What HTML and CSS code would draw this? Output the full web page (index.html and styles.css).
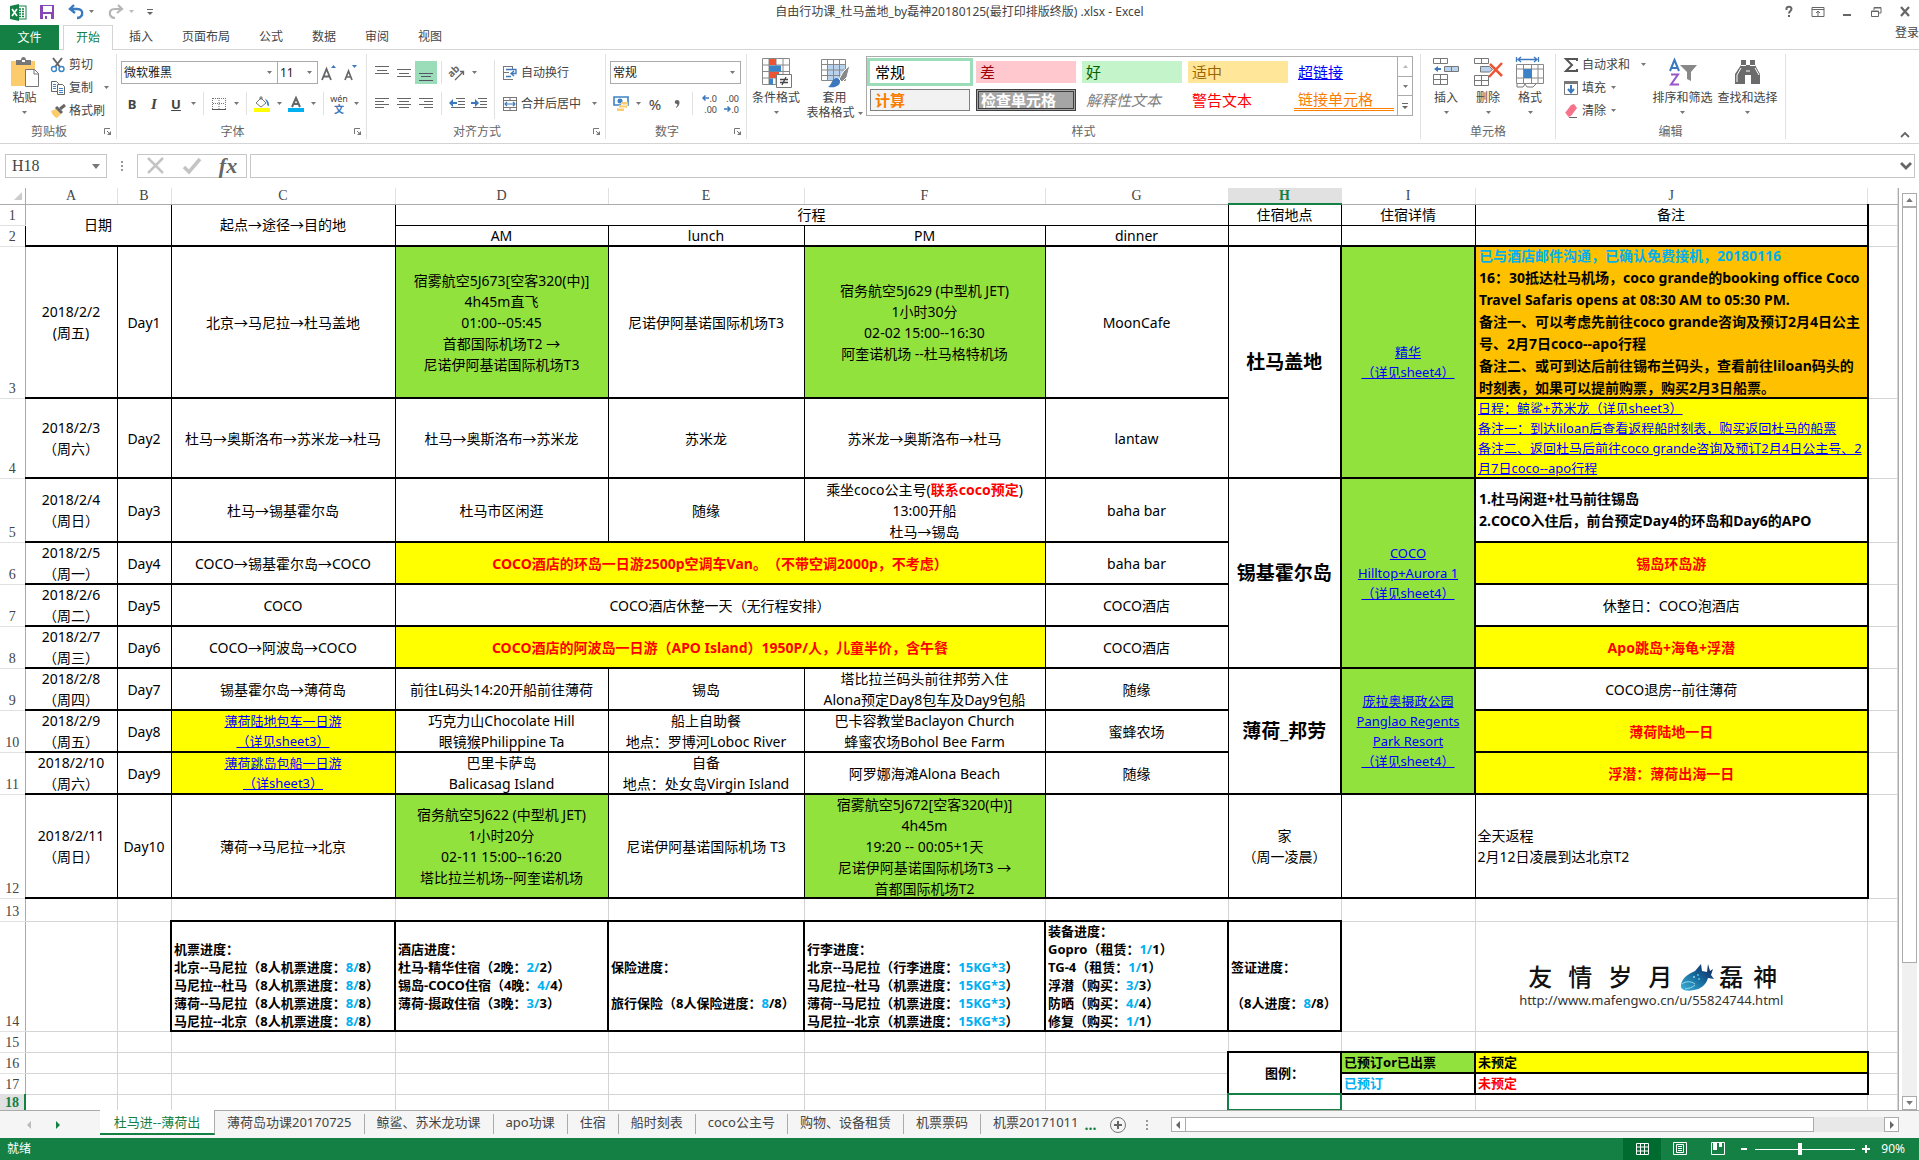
FILE: index.html
```html
<!DOCTYPE html>
<html lang="zh-CN">
<head>
<meta charset="utf-8">
<title>自由行功课_杜马盖地_by磊神20180125(最打印排版终版) .xlsx - Excel</title>
<link rel="stylesheet" href="styles.css">
</head>
<body>
<svg class="defs" aria-hidden="true">
  <symbol id="dd" viewBox="0 0 5 3"><path d="M0 0h5L2.500 3z" fill="#777"/></symbol>
  <symbol id="launch" viewBox="0 0 8 8"><path d="M.5 6V.5H6M3 3l3 3" fill="none" stroke="#777"/><path d="M7 3v4H3z" fill="#777"/></symbol>
</svg>

<header class="titlebar">
  <div class="qat">
    <svg class="app-icon" viewBox="0 0 20 18"><rect x="9" y="3" width="9" height="13" fill="#fff" stroke="#148044"/><path d="M11 6h2m1 0h2M11 8.500h2m1 0h2M11 11h2m1 0h2M11 13.500h2m1 0h2" stroke="#148044" stroke-width="1.300"/><path d="M2 3l9-2v17l-9-2z" fill="#148044"/><path d="M4 6l5 7M9 6l-5 7" stroke="#fff" stroke-width="1.700"/></svg>
    <button class="q-save" aria-label="保存"><svg class="i16" viewBox="0 0 16 16"><path d="M1 1h14v14H1z" fill="#8548b5"/><path d="M4 2h9v6H4z" fill="#fff"/><path d="M4 10h8v5H4z" fill="#fff"/><path d="M6 12h2v3H6z" fill="#8548b5"/></svg></button>
    <button class="q-btn" aria-label="撤消"><svg class="i16" viewBox="0 0 16 16"><path d="M6 1L2 5l5 4M2 5h7c4 0 6 2 5 6-1 2-3 3-5 3" fill="none" stroke="#3b78bd" stroke-width="2.400"/></svg></button>
    <button class="q-ar" aria-label="撤消列表"><svg class="dd"><use href="#dd"/></svg></button>
    <button class="q-btn q-redo" aria-label="恢复"><svg class="i16" viewBox="0 0 16 16"><path d="M10 1l4 4-5 4M14 5H7c-4 0-6 2-5 6 1 2 3 3 5 3" fill="none" stroke="#b5b5b5" stroke-width="2.200"/></svg></button>
    <button class="q-ar faded" aria-label="恢复列表"><svg class="dd"><use href="#dd"/></svg></button>
    <button class="q-more" aria-label="自定义快速访问工具栏"><svg class="i8" viewBox="0 0 8 8"><path d="M1 1.500h6" stroke="#666"/><path d="M1 4h6L4 7z" fill="#666"/></svg></button>
  </div>
  <h1 class="doc-title">自由行功课_杜马盖地_by磊神20180125(最打印排版终版) .xlsx - Excel</h1>
  <div class="win-btns">
    <button aria-label="帮助"><svg class="i16" viewBox="0 0 16 16"><path d="M5.500 6V4.500C5.500 2 10.500 2 10.500 5c0 2-2.500 2-2.500 4.500" fill="none" stroke="#666" stroke-width="2"/><path d="M7 11h2v2H7z" fill="#666"/></svg></button>
    <button aria-label="功能区显示选项"><svg class="i16" viewBox="0 0 16 16"><path d="M2 3.500h12v9H2zM2 5.500h12M8 12V7M6 9l2-2 2 2" fill="none" stroke="#666"/></svg></button>
    <button aria-label="最小化"><svg class="i16" viewBox="0 0 16 16"><path d="M4 10h8v2H4z" fill="#666"/></svg></button>
    <button aria-label="还原"><svg class="i16" viewBox="0 0 16 16"><path d="M3.500 7h7v5.500h-7zM6 6V3.500h7V9h-2M3 7.500h8M6 4h7" fill="none" stroke="#666"/></svg></button>
    <button aria-label="关闭"><svg class="i16" viewBox="0 0 16 16"><path d="M4 3l8 9M12 3l-8 9" stroke="#666" stroke-width="2.200"/></svg></button>
  </div>
</header>

<nav class="ribbon-tabs">
  <button class="file">文件</button>
  <button class="active">开始</button>
  <button>插入</button>
  <button>页面布局</button>
  <button>公式</button>
  <button>数据</button>
  <button>审阅</button>
  <button>视图</button>
  <a class="login" href="#">登录</a>
</nav>

<section class="ribbon" aria-label="开始">
  <div class="group g-clip">
    <div class="body">
      <button class="big b-paste"><svg class="i32" viewBox="0 0 32 32"><path d="M2 5h24v25H2z" fill="#fbcb6c"/><path d="M7 4h5c0-4 5-4 5 0h5v5H7z" fill="#777"/><path d="M13 4h3v2h-3z" fill="#fff"/><path d="M16.500 13.500h9l4 4v13h-13z" fill="#fff" stroke="#777"/><path d="M25 13v5h5" fill="none" stroke="#777"/></svg><span>粘贴</span><svg class="dd"><use href="#dd"/></svg></button>
      <div class="stack">
        <button class="sm"><svg class="i16" viewBox="0 0 16 16"><path d="M3 1l7 9M12 1L5 10" stroke="#666" stroke-width="2"/><circle cx="4" cy="12" r="2.500" fill="none" stroke="#3b83c5" stroke-width="1.400"/><circle cx="11.500" cy="12" r="2.500" fill="none" stroke="#3b83c5" stroke-width="1.400"/></svg>剪切</button>
        <button class="sm"><svg class="i16" viewBox="0 0 16 16"><path d="M1.500 1.500h5l2 2v8h-7z" fill="#fff" stroke="#666"/><path d="M3 4.500h3M3 6.500h3M3 8.500h3" stroke="#3b83c5"/><path d="M7.500 4.500h5l2 2v8h-7z" fill="#fff" stroke="#666"/><path d="M9 8.500h4M9 10.500h4M9 12.500h4" stroke="#3b83c5"/></svg>复制<svg class="dd far"><use href="#dd"/></svg></button>
        <button class="sm"><svg class="i16" viewBox="0 0 16 16"><path d="M1 8l5-2 5 5-4 4c-3-1-5-4-6-7z" fill="#fbcb6c"/><path d="M6 4l6 6" stroke="#666" stroke-width="3"/><path d="M10 6l5-4" stroke="#666" stroke-width="3"/></svg>格式刷</button>
      </div>
    </div>
    <div class="glabel"><span>剪贴板</span><button aria-label="剪贴板选项"><svg class="i8"><use href="#launch"/></svg></button></div>
  </div>

  <div class="group g-font">
    <div class="body rows">
      <div class="row">
        <select class="combo c-font" aria-label="字体"><option>微软雅黑</option></select>
        <select class="combo c-size" aria-label="字号"><option>11</option></select>
        <button class="tb" aria-label="增大字号"><svg class="i16" viewBox="0 0 16 16"><path d="M1 15L5.500 4 10 15M3 11.500h5" fill="none" stroke="#666" stroke-width="1.800"/><path d="M10 3h5l-2.500-3z" fill="#3b78bd"/></svg></button>
        <button class="tb" aria-label="减小字号"><svg class="i16" viewBox="0 0 16 16"><path d="M2 15l3.500-9L9 15M3 12h5" fill="none" stroke="#666" stroke-width="1.700"/><path d="M9 0h5l-2.500 3z" fill="#3b78bd"/></svg></button>
      </div>
      <div class="row">
        <button class="tb bold">B</button>
        <button class="tb bold ital">I</button>
        <button class="tb bold under">U</button>
        <button class="ar" aria-label="下划线样式"><svg class="dd"><use href="#dd"/></svg></button>
        <i class="sep"></i>
        <button class="tb" aria-label="边框"><svg class="i16" viewBox="0 0 16 16"><path d="M1.500 2v11M14.500 2v11M8 2v11M2 2.500h12M2 7.500h12" stroke="#777" stroke-dasharray="1 1"/><path d="M1 13.500h14" stroke="#555"/></svg></button>
        <button class="ar" aria-label="边框样式"><svg class="dd"><use href="#dd"/></svg></button>
        <i class="sep"></i>
        <button class="tb" aria-label="填充颜色"><svg class="i16" viewBox="0 0 16 16"><path d="M2 7l5-5 5 5-5 4zM6 4V1h2v3" fill="#fff" stroke="#777"/><path d="M11 3c3 1 4 3 4 7-2 0-2-2-2-3z" fill="#3b83c5"/><path d="M0 12h16v4H0z" fill="#ff0"/></svg></button>
        <button class="ar" aria-label="填充颜色列表"><svg class="dd"><use href="#dd"/></svg></button>
        <button class="tb" aria-label="字体颜色"><svg class="i16" viewBox="0 0 16 16"><path d="M4 11L8 2l4 9M5.500 8h5" fill="none" stroke="#666" stroke-width="2"/><path d="M0 12h16v4H0z" fill="#00b0f0"/></svg></button>
        <button class="ar" aria-label="字体颜色列表"><svg class="dd"><use href="#dd"/></svg></button>
        <i class="sep"></i>
        <button class="tb wen" aria-label="拼音"><span>wén</span><span class="zh">文</span></button>
        <button class="ar" aria-label="拼音选项"><svg class="dd"><use href="#dd"/></svg></button>
      </div>
    </div>
    <div class="glabel"><span>字体</span><button aria-label="字体选项"><svg class="i8"><use href="#launch"/></svg></button></div>
  </div>

  <div class="group g-align">
    <div class="body">
      <div class="rows al-left">
        <div class="row">
          <button class="tb" aria-label="顶端对齐"><svg class="i16" viewBox="0 0 16 16"><path d="M1 1.500h14M3 5.500h10M1 8.500h14" stroke="#666"/></svg></button>
          <button class="tb" aria-label="垂直居中"><svg class="i16" viewBox="0 0 16 16"><path d="M1 4.500h14M3 8.500h10M1 11.500h14" stroke="#666"/></svg></button>
          <button class="tb on" aria-label="底端对齐"><svg class="i16" viewBox="0 0 16 16"><path d="M1 8.500h14M3 11.500h10M1 15.500h14" stroke="#556"/></svg></button>
          <i class="sep"></i>
          <button class="tb" aria-label="方向"><svg class="i16" viewBox="0 0 16 16"><text x="0" y="9" transform="rotate(-45 6 8)" class="ab">ab</text><path d="M6 15l8-8M11 6.500h3.500V10" fill="none" stroke="#666" stroke-width="1.300"/></svg></button>
          <button class="ar" aria-label="方向列表"><svg class="dd"><use href="#dd"/></svg></button>
        </div>
        <div class="row">
          <button class="tb" aria-label="左对齐"><svg class="i16" viewBox="0 0 16 16"><path d="M1 2.500h14M1 5.500h9M1 8.500h14M1 11.500h9" stroke="#666"/></svg></button>
          <button class="tb" aria-label="居中"><svg class="i16" viewBox="0 0 16 16"><path d="M1 2.500h14M3 5.500h10M1 8.500h14M3 11.500h10" stroke="#666"/></svg></button>
          <button class="tb" aria-label="右对齐"><svg class="i16" viewBox="0 0 16 16"><path d="M1 2.500h14M6 5.500h9M1 8.500h14M6 11.500h9" stroke="#666"/></svg></button>
          <i class="sep"></i>
          <button class="tb" aria-label="减少缩进量"><svg class="i16" viewBox="0 0 16 16"><path d="M7 2.500h9M9 5.500h7M9 8.500h7M2 11.500h14" stroke="#666"/><path d="M0 7l4-4v3h4v2H4v3z" fill="#3b78bd"/></svg></button>
          <button class="tb" aria-label="增加缩进量"><svg class="i16" viewBox="0 0 16 16"><path d="M7 2.500h9M9 5.500h7M9 8.500h7M2 11.500h14" stroke="#666"/><path d="M8 7L4 3v3H0v2h4v3z" fill="#3b78bd"/></svg></button>
        </div>
      </div>
      <i class="vsep"></i>
      <div class="rows">
        <button class="sm"><svg class="i16" viewBox="0 0 16 16"><path d="M1.500 1v14M1 1.500h10M1 7.500h6M1 14.500h10M10.500 1v4" stroke="#777" fill="none"/><path d="M4 4.500h10v4h-4M4 11.500h5M12 6l-3 2.500L12 11" fill="none" stroke="#3b78bd" stroke-width="1.300"/></svg>自动换行</button>
        <button class="sm"><svg class="i16" viewBox="0 0 16 16"><path d="M1.500 1v14M14.500 1v14M1 1.500h14M1 4.500h14M1 11.500h14M1 14.500h14M8 1v3M8 12v3" stroke="#777"/><path d="M3 8h10M5 6L3 8l2 2M11 6l2 2-2 2" fill="none" stroke="#3b78bd" stroke-width="1.200"/></svg>合并后居中<svg class="dd far"><use href="#dd"/></svg></button>
      </div>
    </div>
    <div class="glabel"><span>对齐方式</span><button aria-label="对齐选项"><svg class="i8"><use href="#launch"/></svg></button></div>
  </div>

  <div class="group g-num">
    <div class="body rows">
      <div class="row"><select class="combo c-num" aria-label="数字格式"><option>常规</option></select></div>
      <div class="row">
        <button class="tb" aria-label="会计数字格式"><svg class="i16" viewBox="0 0 16 16"><path d="M1 1h14v8H1z" fill="#fff" stroke="#3b83c5" stroke-width="1.600"/><circle cx="7" cy="5" r="2.500" fill="#3b83c5"/><path d="M8 6h7v3H8zM6 9h8v3H6zM4 12h7v3H4z" fill="#fbcb6c"/><path d="M8 9h7M5 12h8" stroke="#fff" fill="none"/></svg></button>
        <button class="ar" aria-label="货币列表"><svg class="dd"><use href="#dd"/></svg></button>
        <button class="tb pct">%</button>
        <button class="tb comma" aria-label="千位分隔"><svg class="i16" viewBox="0 0 16 16"><path d="M8 4c4 0 3 6-1 8v-1c1-1 2-2 1-3-3 0-3-4 0-4z" fill="#666"/></svg></button>
        <i class="sep"></i>
        <button class="tb dec" aria-label="增加小数位数"><span><svg class="dec-ar" viewBox="0 0 7 6"><path d="M7 3H1M3.500.5L1 3l2.500 2.500" fill="none" stroke="#3b78bd" stroke-width="1.500"/></svg>.0</span><span>.00</span></button>
        <button class="tb dec" aria-label="减少小数位数"><span>.00</span><span><svg class="dec-ar" viewBox="0 0 7 6"><path d="M0 3h6M3.500.5L6 3 3.500 5.500" fill="none" stroke="#3b78bd" stroke-width="1.500"/></svg>.0</span></button>
      </div>
    </div>
    <div class="glabel"><span>数字</span><button aria-label="数字选项"><svg class="i8"><use href="#launch"/></svg></button></div>
  </div>

  <div class="group g-style">
    <div class="body">
      <button class="big b-cond"><svg class="i32" viewBox="0 0 32 32"><path d="M2.500 2.500h27v26h-27zM2 9h28M2 15.500h28M2 22h28M9 2v27M16 2v27M23 2v27" fill="#fff" stroke="#888"/><path d="M9 3h7v6H9zM9 16h10v6H9z" fill="#ee5431"/><path d="M9 9.500h12v6H9zM9 22.500h4v6H9z" fill="#3b83c5"/><path d="M16.500 18.500h15v13h-15z" fill="#fff" stroke="#777"/><path d="M20 23.500h8M20 26.500h8M26 21l-4 8" stroke="#444" stroke-width="1.300"/></svg><span>条件格式</span><svg class="dd"><use href="#dd"/></svg></button>
      <button class="big b-tbl"><svg class="i32" viewBox="0 0 32 32"><path d="M9 8h17v16H9z" fill="#b9d3ee"/><path d="M2.500 3.500h24v21h-24zM2 8.500h25M2 14h25M2 19.500h25M8.500 3v22M14.500 3v22M20.500 3v22" fill="none" stroke="#888"/><path d="M31 9l-3 12-5 5-3-3 4-7z" fill="#888" stroke="#fff"/><path d="M9 31c3-1 4-9 9-9 4 2 4 6 0 8-3 2-6 1-9 1z" fill="#3b78bd"/></svg><span>套用</span><span>表格格式 <svg class="dd"><use href="#dd"/></svg></span></button>
      <div class="gallery">
        <div class="swatches">
          <button class="sw sel">常规</button><button class="sw bad">差</button><button class="sw good">好</button><button class="sw neutral">适中</button><button class="sw link">超链接</button>
          <button class="sw calc">计算</button><button class="sw check">检查单元格</button><button class="sw expl">解释性文本</button><button class="sw warn">警告文本</button><button class="sw linked">链接单元格</button>
        </div>
        <div class="gscroll">
          <button class="faded" aria-label="向上"><svg class="dd flip"><use href="#dd"/></svg></button>
          <button aria-label="向下"><svg class="dd"><use href="#dd"/></svg></button>
          <button aria-label="其他"><svg class="i8" viewBox="0 0 8 8"><path d="M1 1.500h6" stroke="#666"/><path d="M1 4h6L4 7z" fill="#666"/></svg></button>
        </div>
      </div>
    </div>
    <div class="glabel"><span>样式</span></div>
  </div>

  <div class="group g-cells">
    <div class="body">
      <button class="big b-cell"><svg class="i32" viewBox="0 0 32 32"><path d="M3.500 2.500h14v5h-14zM10.500 2v6M3.500 18.500h14v10h-14zM3 23.500h15M10.500 18v11" fill="#fff" stroke="#777"/><path d="M14.500 10.500h14v5h-14zM21.500 10v6" fill="#b9d3ee" stroke="#777"/><path d="M4 13l4-3v2h3v2H8v2z" fill="#3b78bd"/></svg><span>插入</span><svg class="dd"><use href="#dd"/></svg></button>
      <button class="big b-cell"><svg class="i32" viewBox="0 0 32 32"><path d="M2.500 2.500h14v5h-14zM9.500 2v6M2.500 19.500h14v10h-14zM2 24.500h15M9.500 19v11" fill="#fff" stroke="#777"/><path d="M8.500 10.500h9l3 3-3 2.500h-9z" fill="#b9d3ee" stroke="#777"/><path d="M18 8l12 12M30 7L17 21" stroke="#ee5431" stroke-width="2.500"/></svg><span>删除</span><svg class="dd"><use href="#dd"/></svg></button>
      <button class="big b-cell"><svg class="i32" viewBox="0 0 32 32"><path d="M2.500 1v5M24.500 1v5M4 3.500h19M7 1L4 3.500 7 6M20 1l3 2.500L20 6" fill="none" stroke="#3b78bd" stroke-width="1.300"/><path d="M2.500 8.500h27v19h-27zM2 13h28M2 22h28M9.500 8v20M17.500 8v20M24 8v20" fill="#fff" stroke="#888"/><path d="M10 13h8v9h-8z" fill="#3b83c5"/><path d="M3 28v3h6l2-3 2 3h6l3-3" fill="#fff" stroke="#777"/></svg><span>格式</span><svg class="dd"><use href="#dd"/></svg></button>
    </div>
    <div class="glabel"><span>单元格</span></div>
  </div>

  <div class="group g-edit">
    <div class="body">
      <div class="stack">
        <button class="sm"><svg class="i16" viewBox="0 0 16 16"><path d="M14 4V2H3l6 6-6 6h11v-2" fill="none" stroke="#555" stroke-width="2"/></svg>自动求和<svg class="dd far"><use href="#dd"/></svg></button>
        <button class="sm"><svg class="i16" viewBox="0 0 16 16"><path d="M1.500 1.500h13v13h-13z" fill="#fff" stroke="#777"/><path d="M1 1h14v3H1z" fill="#777"/><path d="M8 5v7M5 9l3 3.500L11 9" fill="none" stroke="#3b78bd" stroke-width="2"/></svg>填充<svg class="dd near"><use href="#dd"/></svg></button>
        <button class="sm"><svg class="i16" viewBox="0 0 16 16"><path d="M8 2l3-1 3 4-6 8-3 1-3-4z" fill="#f4748c"/><path d="M2 10l3 4" stroke="#fff"/><path d="M6 14.500h8" stroke="#666"/></svg>清除<svg class="dd near"><use href="#dd"/></svg></button>
      </div>
      <button class="big b-find"><svg class="i32" viewBox="0 0 32 32"><path d="M3 15L7.500 4 12 15M4.500 12h6" fill="none" stroke="#3b78bd" stroke-width="2"/><path d="M4 18.500h7l-7 10h8" fill="none" stroke="#9a55c8" stroke-width="2"/><path d="M13 9h17l-6 7v9l-4-2v-7z" fill="#888"/></svg><span>排序和筛选</span><svg class="dd"><use href="#dd"/></svg></button>
      <button class="big b-find"><svg class="i32" viewBox="0 0 32 32"><path d="M9 4h5v5h4V4h5v5l5 9v10h-9v-9h-6v9H3V18l6-9z" fill="#6b6b6b"/><path d="M9 9.500h5M18 9.500h5M9 12l-4 7v7M23 12l4 7M14 15h4" stroke="#fff" fill="none"/></svg><span>查找和选择</span><svg class="dd"><use href="#dd"/></svg></button>
    </div>
    <div class="glabel"><span>编辑</span></div>
  </div>
  <button class="collapse" aria-label="折叠功能区"><svg class="i8" viewBox="0 0 8 8"><path d="M0 6l4-4 4 4" fill="none" stroke="#666" stroke-width="1.800"/></svg></button>
</section>

<div class="formula-bar">
  <div class="namebox"><input value="H18" aria-label="名称框"><button aria-label="名称列表"><svg class="dd8"><use href="#dd"/></svg></button></div>
  <i class="dots"></i>
  <div class="fx-box">
    <button aria-label="取消"><svg class="i20" viewBox="0 0 20 20"><path d="M2 2l15 15M17 2L2 17" stroke="#c4c4c4" stroke-width="2.500"/></svg></button>
    <button aria-label="输入"><svg class="i20" viewBox="0 0 20 20"><path d="M2 11l5 5L18 3" fill="none" stroke="#c4c4c4" stroke-width="3.500"/></svg></button>
    <button class="fx">fx</button>
  </div>
  <div class="fbox"><input aria-label="编辑栏"><button aria-label="展开编辑栏"><svg class="i16" viewBox="0 0 16 16"><path d="M3 5l5 5 5-5" fill="none" stroke="#666" stroke-width="2.800"/></svg></button></div>
</div>

<main class="sheet-area">
  <div class="viewport">
    <table class="sheet">
      <colgroup><col class="k0"><col class="kA"><col class="kB"><col class="kC"><col class="kD"><col class="kE"><col class="kF"><col class="kG"><col class="kH"><col class="kI"><col><col class="kK"></colgroup>
      <thead><tr><th class="corner"><svg class="i8" viewBox="0 0 8 8"><path d="M8 0v8H0z" fill="#ccc"/></svg></th><th>A</th><th>B</th><th>C</th><th>D</th><th>E</th><th>F</th><th>G</th><th class="hsel">H</th><th>I</th><th>J</th><th></th></tr></thead>
      <tbody>
        <tr class="r21"><th>1</th><td class="t u" colspan="2" rowspan="2">日期</td><td class="t u" rowspan="2">起点→途径→目的地</td><td class="t" colspan="4">行程</td><td class="t">住宿地点</td><td class="t">住宿详情</td><td class="t end">备注</td><td></td></tr>
        <tr class="r21"><th>2</th><td class="t u">AM</td><td class="t u">lunch</td><td class="t u">PM</td><td class="t u">dinner</td><td class="t u"></td><td class="t u"></td><td class="t u end"></td><td></td></tr>
        <tr class="r3"><th>3</th><td class="t u">2018/2/2<br>(周五)</td><td class="t u">Day1</td><td class="t u">北京→马尼拉→杜马盖地</td><td class="t u green">宿雾航空5J673[空客320(中)]<br>4h45m直飞<br>01:00--05:45<br>首都国际机场T2 →<br>尼诺伊阿基诺国际机场T3</td><td class="t u">尼诺伊阿基诺国际机场T3</td><td class="t u green">宿务航空5J629 (中型机 JET)<br>1小时30分<br>02-02 15:00--16:30<br>阿奎诺机场 --杜马格特机场</td><td class="t u">MoonCafe</td><td class="t u place" rowspan="2">杜马盖地</td><td class="t u green stay" rowspan="2"><a href="#">精华<br>（详见sheet4）</a></td><td class="t u end orange note"><div class="fit"><span class="cyan">已与酒店邮件沟通，已确认免费接机，20180116</span><br>16：30抵达杜马机场，coco grande的booking office Coco<br>Travel Safaris opens at 08:30 AM to 05:30 PM.<br>备注一、可以考虑先前往coco grande咨询及预订2月4日公主<br>号、2月7日coco--apo行程<br>备注二、或可到达后前往锡布兰码头，查看前往liloan码头的<br>时刻表，如果可以提前购票，购买2月3日船票。</div></td><td></td></tr>
        <tr class="r4"><th>4</th><td class="t u">2018/2/3<br>（周六）</td><td class="t u">Day2</td><td class="t u">杜马→奥斯洛布→苏米龙→杜马</td><td class="t u">杜马→奥斯洛布→苏米龙</td><td class="t u">苏米龙</td><td class="t u">苏米龙→奥斯洛布→杜马</td><td class="t u">lantaw</td><td class="t u end yellow left small"><div class="fit"><a href="#">日程：鲸鲨+苏米龙（详见sheet3）<br>备注一：到达liloan后查看返程船时刻表，购买返回杜马的船票<br>备注二、返回杜马后前往coco grande咨询及预订2月4日公主号、2<br>月7日coco--apo行程</a></div></td><td></td></tr>
        <tr class="r5"><th>5</th><td class="t u">2018/2/4<br>（周日）</td><td class="t u">Day3</td><td class="t u">杜马→锡基霍尔岛</td><td class="t u">杜马市区闲逛</td><td class="t u">随缘</td><td class="t u"><div class="fit">乘坐coco公主号(<b class="red">联系coco预定</b>)<br>13:00开船<br>杜马→锡岛</div></td><td class="t u">baha bar</td><td class="t u place" rowspan="4">锡基霍尔岛</td><td class="t u green stay" rowspan="4"><a href="#">COCO<br>Hilltop+Aurora 1<br>（详见sheet4）</a></td><td class="t u end note">1.杜马闲逛+杜马前往锡岛<br>2.COCO入住后，前台预定Day4的环岛和Day6的APO</td><td></td></tr>
        <tr class="r42"><th>6</th><td class="t u"><div class="fit">2018/2/5<br>（周一）</div></td><td class="t u">Day4</td><td class="t u">COCO→锡基霍尔岛→COCO</td><td class="t u yellow red strong" colspan="3">COCO酒店的环岛一日游2500p空调车Van。（不带空调2000p，不考虑）</td><td class="t u">baha bar</td><td class="t u end yellow red strong">锡岛环岛游</td><td></td></tr>
        <tr class="r42"><th>7</th><td class="t u"><div class="fit">2018/2/6<br>（周二）</div></td><td class="t u">Day5</td><td class="t u">COCO</td><td class="t u" colspan="3">COCO酒店休整一天（无行程安排）</td><td class="t u">COCO酒店</td><td class="t u end">休整日：COCO泡酒店</td><td></td></tr>
        <tr class="r42"><th>8</th><td class="t u"><div class="fit">2018/2/7<br>（周三）</div></td><td class="t u">Day6</td><td class="t u">COCO→阿波岛→COCO</td><td class="t u yellow red strong" colspan="3">COCO酒店的阿波岛一日游（APO Island）1950P/人，儿童半价，含午餐</td><td class="t u">COCO酒店</td><td class="t u end yellow red strong">Apo跳岛+海龟+浮潜</td><td></td></tr>
        <tr class="r42"><th>9</th><td class="t u"><div class="fit">2018/2/8<br>（周四）</div></td><td class="t u">Day7</td><td class="t u">锡基霍尔岛→薄荷岛</td><td class="t u">前往L码头14:20开船前往薄荷</td><td class="t u">锡岛</td><td class="t u"><div class="fit">塔比拉兰码头前往邦劳入住<br>Alona预定Day8包车及Day9包船</div></td><td class="t u">随缘</td><td class="t u place" rowspan="3">薄荷_邦劳</td><td class="t u green stay" rowspan="3"><a href="#">庞拉奥摄政公园<br>Panglao Regents<br>Park Resort<br>（详见sheet4）</a></td><td class="t u end">COCO退房--前往薄荷</td><td></td></tr>
        <tr class="r42"><th>10</th><td class="t u"><div class="fit">2018/2/9<br>（周五）</div></td><td class="t u">Day8</td><td class="t u yellow small"><a href="#">薄荷陆地包车一日游<br>（详见sheet3）</a></td><td class="t u"><div class="fit">巧克力山Chocolate Hill<br>眼镜猴Philippine Ta</div></td><td class="t u"><div class="fit">船上自助餐<br>地点：罗博河Loboc River</div></td><td class="t u"><div class="fit">巴卡容教堂Baclayon Church<br>蜂蜜农场Bohol Bee Farm</div></td><td class="t u">蜜蜂农场</td><td class="t u end yellow red strong">薄荷陆地一日</td><td></td></tr>
        <tr class="r42"><th>11</th><td class="t u"><div class="fit">2018/2/10<br>（周六）</div></td><td class="t u">Day9</td><td class="t u yellow small"><a href="#">薄荷跳岛包船一日游<br>（详sheet3）</a></td><td class="t u"><div class="fit">巴里卡萨岛<br>Balicasag Island</div></td><td class="t u"><div class="fit">自备<br>地点：处女岛Virgin Island</div></td><td class="t u">阿罗娜海滩Alona Beach</td><td class="t u">随缘</td><td class="t u end yellow red strong">浮潜：薄荷出海一日</td><td></td></tr>
        <tr class="r12"><th>12</th><td class="t u">2018/2/11<br>（周日）</td><td class="t u">Day10</td><td class="t u">薄荷→马尼拉→北京</td><td class="t u green">宿务航空5J622 (中型机 JET)<br>1小时20分<br>02-11 15:00--16:20<br>塔比拉兰机场--阿奎诺机场</td><td class="t u">尼诺伊阿基诺国际机场 T3</td><td class="t u green"><div class="fit">宿雾航空5J672[空客320(中)]<br>4h45m<br>19:20 -- 00:05+1天<br>尼诺伊阿基诺国际机场T3 →<br>首都国际机场T2</div></td><td class="t u"></td><td class="t u">家<br>（周一凌晨）</td><td class="t u"></td><td class="t u end left">全天返程<br>2月12日凌晨到达北京T2</td><td></td></tr>
        <tr class="r13"><th>13</th><td></td><td></td><td></td><td></td><td></td><td></td><td></td><td></td><td></td><td></td><td></td></tr>
        <tr class="r14"><th>14</th><td></td><td></td>
          <td class="box prog low">机票进度：<br>北京--马尼拉（8人机票进度：<i>8/</i>8）<br>马尼拉--杜马（8人机票进度：<i>8/</i>8）<br>薄荷--马尼拉（8人机票进度：<i>8/</i>8）<br>马尼拉--北京（8人机票进度：<i>8/</i>8）</td>
          <td class="box prog">酒店进度：<br>杜马-精华住宿（2晚：<i>2/</i>2）<br>锡岛-COCO住宿（4晚：<i>4/</i>4）<br>薄荷-摄政住宿（3晚：<i>3/</i>3）</td>
          <td class="box prog low">保险进度：<br><br>旅行保险（8人保险进度：<i>8</i>/8）</td>
          <td class="box prog low">行李进度：<br>北京--马尼拉（行李进度：<i>15KG*3</i>）<br>马尼拉--杜马（机票进度：<i>15KG*3</i>）<br>薄荷--马尼拉（机票进度：<i>15KG*3</i>）<br>马尼拉--北京（机票进度：<i>15KG*3</i>）</td>
          <td class="box prog">装备进度：<br>Gopro（租赁：<i>1/</i>1）<br>TG-4（租赁：<i>1/</i>1）<br>浮潜（购买：<i>3/</i>3）<br>防晒（购买：<i>4/</i>4）<br>修复（购买：<i>1/</i>1）</td>
          <td class="box prog low">签证进度：<br><br>（8人进度：<i>8</i>/8）</td>
          <td></td>
          <td><div class="mark"><div class="mark-name"><span>友</span><span>情</span><span>岁</span><span>月</span><svg viewBox="0 0 34 28"><defs><linearGradient id="sea" x1="0" y1="1" x2="1" y2="0"><stop offset="0" stop-color="#3fb4d8"/><stop offset=".5" stop-color="#17689c"/><stop offset="1" stop-color="#101c55"/></linearGradient></defs><path d="M1 22C2 15 8 11 15 8l6-7 1 7 5 1 1-8 2 7 3-2-2 6 3 4-6-1c-2 7-7 11-14 12-9 2-14-1-13-5z" fill="url(#sea)"/><path d="M2 21c4-3 9-3 13 0M5 26c4-1 7-1 10-4" stroke="#8fdcf0" fill="none"/><circle cx="14" cy="14" r="1" fill="#8fdcf0"/><circle cx="18" cy="12" r="1" fill="#5fc0e0"/><circle cx="19" cy="16" r="1" fill="#5fc0e0"/></svg><span>磊</span><span>神</span></div><div class="mark-url">http://www.mafengwo.cn/u/55824744.html</div></div></td>
          <td></td></tr>
        <tr class="r21"><th>15</th><td></td><td></td><td></td><td></td><td></td><td></td><td></td><td></td><td></td><td></td><td></td></tr>
        <tr class="r21"><th>16</th><td></td><td></td><td></td><td></td><td></td><td></td><td></td><td class="box legend" rowspan="2">图例：</td><td class="box key green">已预订or已出票</td><td class="box key yellow">未预定</td><td></td></tr>
        <tr class="r21"><th>17</th><td></td><td></td><td></td><td></td><td></td><td></td><td></td><td class="box key cyan">已预订</td><td class="box key red">未预定</td><td></td></tr>
        <tr class="r18"><th class="rsel">18</th><td></td><td></td><td></td><td></td><td></td><td></td><td></td><td class="cursor"></td><td></td><td></td><td></td></tr>
      </tbody>
    </table>
  </div>
  <div class="vscroll">
    <button aria-label="向上滚动"><svg class="dd7 flip"><use href="#dd"/></svg></button>
    <div class="vtrack"><div class="vthumb"></div></div>
    <button aria-label="向下滚动"><svg class="dd7"><use href="#dd"/></svg></button>
  </div>
</main>

<div class="tabbar">
  <div class="tabs">
    <div class="tabnav">
      <button aria-label="上一张"><svg class="i8" viewBox="0 0 8 8"><path d="M6 0v8L2 4z" fill="#bbb"/></svg></button>
      <button aria-label="下一张"><svg class="i8" viewBox="0 0 8 8"><path d="M2 0v8l4-4z" fill="#148044"/></svg></button>
    </div>
    <button class="tab current">杜马进--薄荷出</button>
    <button class="tab">薄荷岛功课20170725</button>
    <button class="tab">鲸鲨、苏米龙功课</button>
    <button class="tab">apo功课</button>
    <button class="tab">住宿</button>
    <button class="tab">船时刻表</button>
    <button class="tab">coco公主号</button>
    <button class="tab">购物、设备租赁</button>
    <button class="tab">机票票码</button>
    <button class="tab last">机票20171011</button>
    <button class="more">...</button>
    <button class="add" aria-label="新工作表"><svg class="i16" viewBox="0 0 16 16"><circle cx="8" cy="8" r="7.500" fill="none" stroke="#777"/><path d="M8 4v8M4 8h8" stroke="#666" stroke-width="2"/></svg></button>
    <i class="dots"></i>
  </div>
  <div class="hscroll">
    <button aria-label="向左滚动"><svg class="i8" viewBox="0 0 8 8"><path d="M6 0v8L2 4z" fill="#666"/></svg></button>
    <div class="htrack"><div class="hthumb"></div></div>
    <button aria-label="向右滚动"><svg class="i8" viewBox="0 0 8 8"><path d="M2 0v8l4-4z" fill="#666"/></svg></button>
  </div>
</div>

<footer class="status">
  <span>就绪</span>
  <div class="views">
    <button class="on" aria-label="普通"><svg class="i16" viewBox="0 0 16 16"><path d="M2.500 2.500h12v11h-12zM2 6h13M2 10h13M6.500 2v12M10.500 2v12" fill="none" stroke="#fff"/></svg></button>
    <button aria-label="页面布局"><svg class="i16" viewBox="0 0 16 16"><path d="M1.500 1.500h13v12h-13zM4.500 3.500h7v8h-7zM6 5.500h4M6 7.500h4M6 9.500h4" fill="none" stroke="#fff"/></svg></button>
    <button aria-label="分页预览"><svg class="i16" viewBox="0 0 16 16"><path d="M1.500 1.500h13v12h-13z" fill="none" stroke="#fff"/><path d="M3 2h4v7H3zM9 2h3v4H9z" fill="#fff"/></svg></button>
  </div>
  <button class="z" aria-label="缩小"><svg class="i8" viewBox="0 0 8 8"><path d="M1 3h6v2H1z" fill="#fff"/></svg></button>
  <input type="range" class="zoom" min="0" max="100" value="45" aria-label="显示比例">
  <button class="z" aria-label="放大"><svg class="i8" viewBox="0 0 8 8"><path d="M0 3h8v2H0zM3 0h2v8H3z" fill="#fff"/></svg></button>
  <span class="pc">90%</span>
</footer>
</body>
</html>
```
FILE: styles.css
```css
* { box-sizing: border-box; }
body {
  margin: 0;
  height: 100vh;
  display: flex;
  flex-direction: column;
  overflow: hidden;
  background: #fff;
  color: #444;
  font: 12px/16px "Noto Sans", "Noto Sans CJK SC", sans-serif;
  text-spacing-trim: space-all;
}
button, input, select {
  font: inherit;
  color: inherit;
  margin: 0;
  padding: 0;
  border: 0;
  background: none;
  white-space: nowrap;
}
input { min-width: 0; outline: 0; }
svg { display: block; flex: none; overflow: visible; }
.defs { position: absolute; width: 0; height: 0; }
.i8 { width: 8px; height: 8px; }
.i16 { width: 16px; height: 16px; }
.i20 { width: 20px; height: 20px; }
.i32 { width: 32px; height: 32px; }
.dd { width: 5px; height: 3px; }
.dd7 { width: 7px; height: 4px; }
.dd8 { width: 8px; height: 5px; }
.flip { transform: rotate(180deg); }
.faded { opacity: .5; }

/* title bar */
.titlebar {
  height: 25px;
  display: grid;
  grid-template-columns: 1fr auto 1fr;
  align-items: center;
  padding-bottom: 2px;
}
.qat { display: flex; align-items: center; padding-left: 8px; }
.qat button { display: flex; justify-content: center; }
.app-icon { width: 20px; height: 18px; }
.q-save { width: 38px; }
.q-btn { width: 20px; }
.q-ar { width: 10px; }
.q-redo { margin-left: 10px; }
.q-more { width: 28px; }
.doc-title { margin: 0; font-size: 12px; font-weight: 400; }
.win-btns { display: flex; justify-content: flex-end; }
.win-btns button { width: 29px; display: flex; justify-content: center; }

/* ribbon tabs */
.ribbon-tabs { height: 25px; display: flex; border-bottom: 1px solid #d4d4d4; }
.ribbon-tabs button { padding: 0 14px; margin-right: 1px; height: 24px; }
.ribbon-tabs .file { width: 59px; height: 25px; margin-right: 4px; background: #148044; color: #fff; }
.ribbon-tabs .active {
  width: 50px;
  padding: 0;
  height: 25px;
  margin-right: 2px;
  border: 1px solid #d4d4d4;
  border-bottom: 0;
  background: #fff;
  color: #148044;
}
.login { width: 24px; margin-left: auto; color: #444; text-decoration: none; white-space: nowrap; }

/* ribbon */
.ribbon { height: 94px; display: flex; padding: 4px 0; border-bottom: 1px solid #d4d4d4; }
.group { flex: none; display: flex; flex-direction: column; border-right: 1px solid #e1e1e1; }
.body { height: 73px; display: flex; }
.glabel {
  display: flex;
  align-items: center;
  height: 14px;
  line-height: 14px;
  color: #666;
}
.glabel span { flex: 1; text-align: center; }
.glabel button { width: 18px; padding-left: 6px; }
.rows { display: flex; flex-direction: column; gap: 8px; padding-top: 7px; }
.row { display: flex; align-items: center; height: 23px; }
.stack { display: flex; flex-direction: column; }
.sm { display: flex; align-items: center; gap: 3px; height: 23px; padding: 0 3px; }
.stack .sm { padding: 0 3px 2px 1px; }
.sm .far { margin-left: 8px; }
.sm .near { margin-left: 2px; }
.tb, .ar { height: 23px; display: flex; align-items: center; justify-content: center; }
.tb { width: 22px; }
.ar { width: 12px; }
.on { background: #9bdcb9; }
.sep { width: 1px; height: 23px; margin: 0 4px; background: #e1e1e1; }
.vsep { width: 1px; margin: 6px 4px; background: #e1e1e1; }
.big { display: flex; flex-direction: column; align-items: center; padding-top: 2px; line-height: 15px; }
.big > .dd { margin-top: 6px; }
.big > svg + span { padding-top: 2px; }
.big span .dd { display: inline-block; vertical-align: middle; }
.combo {
  height: 23px;
  appearance: none;
  border: 1px solid #ababab;
  padding: 0 2px;
  color: #222;
  background: #fff url("data:image/svg+xml,%3Csvg xmlns='http://www.w3.org/2000/svg' width='5' height='3'%3E%3Cpath d='M0 0h5L2.500 3z' fill='%23777'/%3E%3C/svg%3E") no-repeat right 5px center;
}
.g-clip { width: 117px; }
.g-font { width: 250px; }
.g-font .rows, .g-align .body, .g-num .rows, .g-cells .body { padding-left: 4px; }
.g-align { width: 239px; }
.g-num { width: 141px; }
.g-style { width: 674px; }
.g-style .body { padding-left: 2px; }
.g-cells { width: 135px; }
.g-edit { width: 230px; }
.g-edit .body { padding-left: 6px; }
.g-edit .stack { width: 88px; }
.b-paste { width: 49px; }
.b-cond { width: 54px; }
.b-tbl { width: 63px; }
.b-cell { width: 42px; }
.b-find { width: 65px; }
.al-left { width: 119px; }
.c-font { width: 157px; }
.c-size { width: 41px; margin-left: -1px; }
.c-num { width: 131px; }
.bold { font-weight: 700; font-size: 13px; }
.ital { font-style: italic; font-family: "Liberation Serif", serif; font-size: 15px; }
.under { text-decoration: underline; }
.pct { font-size: 15px; }
.ab { font: 700 10px "Noto Sans", sans-serif; fill: #666; }
.wen { flex-direction: column; font-size: 9px; line-height: 10px; }
.wen .zh { color: #3b78bd; font-size: 10px; font-weight: 700; }
.dec { flex-direction: column; align-items: flex-end; font-size: 9px; line-height: 11px; padding-right: 2px; }
.dec span { display: flex; align-items: center; height: 11px; }
.dec-ar { width: 7px; height: 6px; }

.gallery { display: flex; width: 547px; height: 60px; margin-top: 2px; border: 1px solid #ababab; }
.swatches { display: grid; grid-template-columns: repeat(5, 106px); grid-auto-rows: 28px; padding-top: 1px; }
.sw { margin: 3px; padding: 0 4px; text-align: left; font-size: 15px; line-height: 18px; height: 22px; color: #000; }
.sw.sel { margin: 0; padding: 0 5px; height: 28px; border: 3px solid #9bdcb9; }
.sw.bad { background: #ffc7ce; color: #9c0006; }
.sw.good { background: #c4f4c9; color: #006100; }
.sw.neutral { background: #ffe699; color: #9c6500; }
.sw.link { color: #00f; text-decoration: underline; }
.sw.calc { background: #f2f2f2; border: 1px solid #7f7f7f; color: #fa7d00; font-weight: 700; }
.sw.check { background: #a5a5a5; border: 3px double #3f3f3f; padding: 0 2px; color: #fff; font-weight: 700; line-height: 16px; }
.sw.expl { color: #7f7f7f; font-style: italic; }
.sw.warn { color: #f00; }
.sw.linked { color: #fa7d00; border-bottom: 3px double #ff8001; }
.gscroll { display: flex; flex-direction: column; width: 15px; border-left: 1px solid #ababab; }
.gscroll button { flex: 1; display: flex; align-items: center; justify-content: center; }
.gscroll button + button { border-top: 1px solid #ababab; }
.collapse { margin: auto 10px 0 auto; }

/* formula bar */
.formula-bar { height: 44px; display: flex; padding: 10px 4px 10px 5px; }
.namebox { width: 102px; display: flex; align-items: center; border: 1px solid #c6c6c6; }
.namebox input { flex: 1; padding-left: 6px; font: 16px "Liberation Serif", serif; }
.namebox button { padding-right: 6px; }
.dots { width: 2px; height: 10px; margin: 7px 14px; border-left: 2px dotted #999; }
.fx-box { display: flex; width: 110px; border: 1px solid #c6c6c6; }
.fx-box button { flex: 1; display: flex; align-items: center; justify-content: center; }
.fx-box .fx { font: italic 700 22px/20px "Liberation Serif", serif; color: #666; }
.fbox { flex: 1; display: flex; align-items: center; margin-left: 3px; border: 1px solid #c6c6c6; }
.fbox input { flex: 1; }

/* worksheet */
.sheet-area { flex: 1; min-height: 0; display: flex; }
.viewport { flex: 1; min-width: 0; overflow: hidden; border-right: 1px solid #ababab; }
.sheet { width: 100%; table-layout: fixed; border-collapse: collapse; color: #000; }
.k0 { width: 25px; }
.kA { width: 92px; }
.kB { width: 54px; }
.kC { width: 224px; }
.kD { width: 213px; }
.kE { width: 196px; }
.kF { width: 241px; }
.kG { width: 183px; }
.kH { width: 113px; }
.kI { width: 134px; }
.kK { width: 30px; }
.sheet th {
  padding: 0;
  font: 14px/15px "Liberation Serif", serif;
  color: #444;
  border: 1px solid #e1e1e1;
}
.sheet thead th { height: 16px; border-top: 0; border-bottom: 1px solid #ababab; }
.sheet tbody th { vertical-align: bottom; line-height: 19px; border-left: 0; border-right: 1px solid #ababab; }
.sheet .corner { border-left: 0; border-right: 1px solid #ababab; }
.corner svg { margin: 0 3px 0 auto; }
.sheet thead .hsel { background: #e1e1e1; color: #148044; font-weight: 700; border-bottom: 2px solid #148044; }
.sheet tbody .rsel { background: #e1e1e1; color: #148044; font-weight: 700; line-height: 15px; border-right: 2px solid #148044; }
.sheet td {
  padding: 0 2px;
  border: 1px solid #d4d4d4;
  font-size: 14px;
  line-height: 21px;
  text-align: center;
  vertical-align: middle;
  white-space: nowrap;
}
.r21 { height: 21px; }
.r18 { height: 16px; }
.sheet .r21 td { line-height: 19px; }
.r3 { height: 152px; }
.r4 { height: 80px; }
.r5 { height: 64px; }
.r42 { height: 42px; }
.r12 { height: 104px; }
.r13 { height: 23px; }
.r14 { height: 110px; }
.fit { margin: -3px 0; }
.sheet .t { border: 1px solid #000; }
.sheet .u { border-bottom-width: 2px; }
.sheet .end { border-right-width: 2px; }
.sheet .left { text-align: left; }
.green { background: #92e23e; }
.yellow { background: #ff0; }
.orange { background: #ffc000; }
.red { color: #f00; }
.cyan { color: #00b0f0; }
.strong { font-weight: 700; }
.sheet .place { font-size: 19px; font-weight: 700; }
.sheet .stay { font-size: 13px; line-height: 20px; border-left-width: 2px; border-right-width: 2px; }
.sheet .small { font-size: 13px; line-height: 20px; }
.sheet .note { font-weight: 700; text-align: left; line-height: 22px; padding: 0 3px; }
.sheet a { color: #00f; }
.sheet .box { border: 2px solid #000; }
.sheet .prog { font-size: 13px; font-weight: 700; line-height: 18px; text-align: left; }
.sheet .low { padding-top: 17px; }
.prog i { font-style: normal; color: #00b0f0; }
.sheet .legend { font-size: 13px; font-weight: 700; border-bottom-color: #148044; }
.sheet .key { font-size: 13px; font-weight: 700; text-align: left; }
.sheet .cursor { border: 2px solid #148044; }
.mark { padding: 20px 40px 0 0; color: #111; }
.mark-name { display: flex; justify-content: center; align-items: center; font-size: 24px; font-weight: 500; line-height: 28px; }
.mark-name span { width: 40px; }
.mark-name svg { width: 34px; height: 28px; }
.mark-name svg + span, .mark-name svg + span + span { width: 34px; }
.mark-url { font-size: 13px; line-height: 18px; color: #333; }

.vscroll { width: 20px; display: flex; flex-direction: column; padding: 5px 2px 0 3px; background: #fff; }
.vscroll button, .hscroll button {
  display: flex;
  align-items: center;
  justify-content: center;
  width: 15px;
  height: 14px;
  border: 1px solid #ababab;
  background: #fff;
}
.vtrack { flex: 1; background: #f0f0f0; }
.vthumb { height: 85%; border: 1px solid #ababab; background: #fff; }

/* sheet tabs */
.tabbar { height: 28px; display: flex; background: #f5f5f5; border-top: 1px solid #ababab; }
.tabs { flex: none; width: 61%; display: flex; }
.tabnav { width: 100px; display: flex; align-items: center; gap: 21px; padding-left: 25px; }
.tab { height: 20px; margin-top: 3px; padding: 0 12px 4px; border-right: 1px solid #ababab; font-size: 13px; line-height: 16px; }
.tab.current { width: 115px; height: 25px; margin-top: -1px; padding-bottom: 0; border-bottom: 2px solid #148044; background: #fff; color: #148044; }
.tab.last { border: 0; padding-right: 6px; }
.more { width: 12px; color: #148044; font-weight: 700; font-size: 14px; }
.add { margin: 0 14px; }
.tabs .dots { margin: 9px 0 0 6px; }
.hscroll { flex: 1; display: flex; height: 15px; margin: 6px 20px 0 0; }
.hscroll button { height: 15px; }
.htrack { flex: 1; background: #e8e8e8; }
.hthumb { width: 90%; height: 15px; border: 1px solid #ababab; border-left: 0; background: #fff; }

/* status bar */
.status { height: 22px; display: flex; align-items: center; padding: 0 14px 0 7px; background: #148044; color: #fff; }
.views { display: flex; margin-left: auto; height: 22px; }
.views button { width: 38px; display: flex; align-items: center; justify-content: center; }
.views .on { background: #006b2e; }
.z { margin: 0 3px; }
.zoom { appearance: none; width: 100px; height: 14px; margin: 0 4px; background: linear-gradient(#fff, #fff) no-repeat center / 100% 1px; }
.zoom::-webkit-slider-thumb { appearance: none; width: 4px; height: 12px; background: #fff; }
.pc { width: 32px; text-align: right; }
```
